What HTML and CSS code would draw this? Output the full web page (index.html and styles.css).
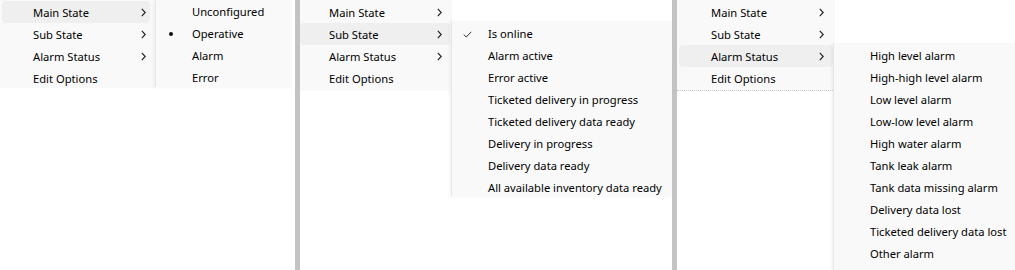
FILE: index.html
```html
<!DOCTYPE html>
<html>
<head>
<meta charset="utf-8">
<link rel="stylesheet" href="styles.css">
</head>
<body>
<div class="stage">
  <section class="panel p1">
    <ul class="menu main">
      <li class="item hover"><span class="label">Main State</span><svg class="chev" viewBox="0 0 5 9" width="5" height="9"><path d="M0.8 0.8 L4.2 4.5 L0.8 8.2"/></svg></li>
      <li class="item"><span class="label">Sub State</span><svg class="chev" viewBox="0 0 5 9" width="5" height="9"><path d="M0.8 0.8 L4.2 4.5 L0.8 8.2"/></svg></li>
      <li class="item"><span class="label">Alarm Status</span><svg class="chev" viewBox="0 0 5 9" width="5" height="9"><path d="M0.8 0.8 L4.2 4.5 L0.8 8.2"/></svg></li>
      <li class="item"><span class="label">Edit Options</span></li>
    </ul>
    <ul class="menu sub">
      <li class="sitem"><span class="mark"></span>Unconfigured</li>
      <li class="sitem"><span class="mark"><span class="dot"></span></span>Operative</li>
      <li class="sitem"><span class="mark"></span>Alarm</li>
      <li class="sitem"><span class="mark"></span>Error</li>
    </ul>
  </section>
  <div class="sep"></div>
  <section class="panel p2">
    <ul class="menu main">
      <li class="item"><span class="label">Main State</span><svg class="chev" viewBox="0 0 5 9" width="5" height="9"><path d="M0.8 0.8 L4.2 4.5 L0.8 8.2"/></svg></li>
      <li class="item hover"><span class="label">Sub State</span><svg class="chev" viewBox="0 0 5 9" width="5" height="9"><path d="M0.8 0.8 L4.2 4.5 L0.8 8.2"/></svg></li>
      <li class="item"><span class="label">Alarm Status</span><svg class="chev" viewBox="0 0 5 9" width="5" height="9"><path d="M0.8 0.8 L4.2 4.5 L0.8 8.2"/></svg></li>
      <li class="item"><span class="label">Edit Options</span></li>
    </ul>
    <ul class="menu sub">
      <li class="sitem"><span class="mark"><svg class="check" viewBox="0 0 9 7" width="9" height="7"><path d="M0.7 3.6 L3.2 6 L8.3 0.8"/></svg></span>Is online</li>
      <li class="sitem"><span class="mark"></span>Alarm active</li>
      <li class="sitem"><span class="mark"></span>Error active</li>
      <li class="sitem"><span class="mark"></span>Ticketed delivery in progress</li>
      <li class="sitem"><span class="mark"></span>Ticketed delivery data ready</li>
      <li class="sitem"><span class="mark"></span>Delivery in progress</li>
      <li class="sitem"><span class="mark"></span>Delivery data ready</li>
      <li class="sitem"><span class="mark"></span>All available inventory data ready</li>
    </ul>
  </section>
  <div class="sep"></div>
  <section class="panel p3">
    <ul class="menu main">
      <li class="item"><span class="label">Main State</span><svg class="chev" viewBox="0 0 5 9" width="5" height="9"><path d="M0.8 0.8 L4.2 4.5 L0.8 8.2"/></svg></li>
      <li class="item"><span class="label">Sub State</span><svg class="chev" viewBox="0 0 5 9" width="5" height="9"><path d="M0.8 0.8 L4.2 4.5 L0.8 8.2"/></svg></li>
      <li class="item hover"><span class="label">Alarm Status</span><svg class="chev" viewBox="0 0 5 9" width="5" height="9"><path d="M0.8 0.8 L4.2 4.5 L0.8 8.2"/></svg></li>
      <li class="item"><span class="label">Edit Options</span></li>
    </ul>
    <ul class="menu sub">
      <li class="sitem"><span class="mark"></span>High level alarm</li>
      <li class="sitem"><span class="mark"></span>High-high level alarm</li>
      <li class="sitem"><span class="mark"></span>Low level alarm</li>
      <li class="sitem"><span class="mark"></span>Low-low level alarm</li>
      <li class="sitem"><span class="mark"></span>High water alarm</li>
      <li class="sitem"><span class="mark"></span>Tank leak alarm</li>
      <li class="sitem"><span class="mark"></span>Tank data missing alarm</li>
      <li class="sitem"><span class="mark"></span>Delivery data lost</li>
      <li class="sitem"><span class="mark"></span>Ticketed delivery data lost</li>
      <li class="sitem"><span class="mark"></span>Other alarm</li>
    </ul>
  </section>
</div>
</body>
</html>
```

FILE: styles.css
```css
html, body {
  margin: 0;
  padding: 0;
  background: #ffffff;
}
body {
  width: 1015px;
  height: 270px;
  overflow: hidden;
  font-family: "Noto Sans", "Open Sans", sans-serif;
  font-size: 11.2px;
  color: #000000;
}
.stage {
  display: flex;
  height: 270px;
}
.panel {
  display: flex;
  align-items: flex-start;
  height: 270px;
  overflow: hidden;
  flex: none;
}
.p1 { width: 295px; }
.p2 { width: 372px; }
.p3 { width: 338px; }
.sep {
  width: 5px;
  flex: none;
  background: #c3c3c3;
}
.menu {
  list-style: none;
  margin: 0;
  padding: 1px 0 1px 0;
  background: #f9f9f9;
  flex: none;
}
.item {
  display: flex;
  align-items: center;
  height: 22px;
  border-radius: 4px;
}
.item.hover {
  background: #efefef;
}
.label {
  width: 108px;
  flex: none;
  line-height: 22px;
  padding-top: 1px;
  height: 21px;
  box-sizing: content-box;
}
.chev {
  flex: none;
  fill: none;
  stroke: #222222;
  stroke-width: 1.15;
  margin-top: 1px;
}
/* panel specific main menu geometry */
.p1 .main { width: 155px; height: 86px; }
.p1 .item { margin: 0 5px 0 2px; padding-left: 31px; }
.p2 .main { width: 152px; padding-bottom: 2px; }
.p2 .item { margin: 0 2px 0 0; padding-left: 29px; }
.p3 .main {
  width: 158px;
  padding-bottom: 1px;
  border-bottom: 1px dotted #c9c9c9;
}
.p3 .item { margin: 0 2px 0 2px; padding-left: 32px; }

.sub {
  border-left: 1px solid #e6e6e6;
  box-shadow: -2px 1px 3px rgba(0,0,0,0.04);
}
.p1 .sub { width: 137px; padding-bottom: 0; height: 87px; box-sizing: border-box; }
.p2 .sub { width: 221px; margin-top: 21px; margin-left: -1px; padding-top: 2px; height: 175px; box-sizing: border-box; overflow: hidden; }
.p3 .sub { width: 182px; margin-top: 43px; margin-left: -2px; padding-top: 2px; height: 240px; }
.sitem {
  display: flex;
  align-items: center;
  height: 22px;
  line-height: 22px;
  box-sizing: border-box;
  white-space: nowrap;
}
.mark {
  width: 36px;
  flex: none;
  display: flex;
  align-items: center;
  justify-content: flex-start;
  height: 20px;
}
.dot {
  width: 4px;
  height: 4px;
  border-radius: 50%;
  background: #111111;
  margin-left: 13px;
}
.check {
  margin-left: 11px;
  fill: none;
  stroke: #333333;
  stroke-width: 1;
}
```
